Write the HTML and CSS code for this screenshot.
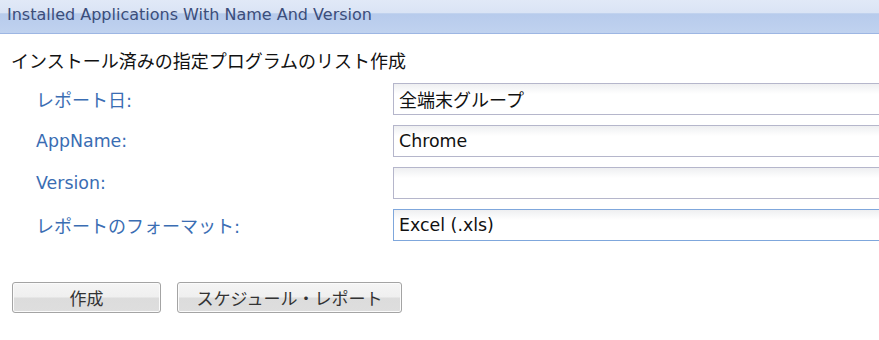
FILE: index.html
```html
<!DOCTYPE html>
<html lang="ja">
<head>
    <meta charset="UTF-8">
    <title>Installed Applications With Name And Version</title>
    <link rel="stylesheet" href="styles.css">
</head>
<body>

    <div class="panel-header">Installed Applications With Name And Version</div>

    <div class="content">
        <p class="description">インストール済みの指定プログラムのリスト作成</p>

        <div class="form-grid">
            <label class="field-label">レポート日:</label>
            <input class="field-input" type="text" value="全端末グループ">

            <label class="field-label latin">AppName:</label>
            <input class="field-input latin" type="text" value="Chrome">

            <label class="field-label latin">Version:</label>
            <input class="field-input latin" type="text" value="">

            <label class="field-label">レポートのフォーマット:</label>
            <input class="field-input active latin" type="text" value="Excel (.xls)">
        </div>

        <div class="actions">
            <button class="btn btn-create">作成</button>
            <button class="btn btn-schedule">スケジュール・レポート</button>
        </div>
    </div>

</body>
</html>
```

FILE: styles.css
```css
/* General */
body {
    margin: 0;
    background: #fff;
    font-family: "DejaVu Sans", "Noto Sans CJK JP", sans-serif;
    color: #111;
    overflow: hidden;
}

/* Header bar */
.panel-header {
    height: 33px;
    line-height: 30px;
    padding-left: 7px;
    font-size: 16px;
    color: #3b4d7a;
    background: linear-gradient(to bottom, #e1e9f7 0%, #dae4f5 38%, #b7cbec 42%, #c0d2ef 100%);
    border-bottom: 1px solid #9db6e3;
    white-space: nowrap;
}

/* Content */
.content {
    padding: 0 0 0 11px;
}

.description {
    margin: 17px 0 0;
    font-size: 18px;
    line-height: 22px;
}

/* Form */
.form-grid {
    display: grid;
    grid-template-columns: 357px 1fr;
    row-gap: 10px;
    margin-top: 10px;
    margin-left: 25px;
    margin-right: -30px;
}

.field-label {
    display: flex;
    align-items: center;
    font-size: 18px;
    color: #3a6db3;
}

.field-input {
    box-sizing: border-box;
    height: 32px;
    width: 100%;
    padding: 0 5px;
    border: 1px solid #b5b6cb;
    background: linear-gradient(to bottom, #eeeff1 0, #fff 10px);
    font-family: inherit;
    font-size: 18px;
    color: #111;
    outline: none;
}

.latin {
    font-size: 17.4px;
}

.field-input.active {
    border-color: #7fa7dc;
}

/* Buttons */
.actions {
    display: flex;
    gap: 16px;
    margin-top: 41px;
    margin-left: 1px;
}

.btn {
    height: 31px;
    padding: 0;
    border: 1px solid #a4a4a4;
    border-radius: 3px;
    background: linear-gradient(to bottom, #f5f5f5 0%, #efefef 48%, #dcdcdc 52%, #dedede 100%);
    box-shadow: inset 0 0 0 1px #fbfbfb;
    font-family: inherit;
    font-size: 17px;
    color: #333;
    cursor: pointer;
}

.btn-create {
    width: 149px;
}

.btn-schedule {
    width: 225px;
}
```
